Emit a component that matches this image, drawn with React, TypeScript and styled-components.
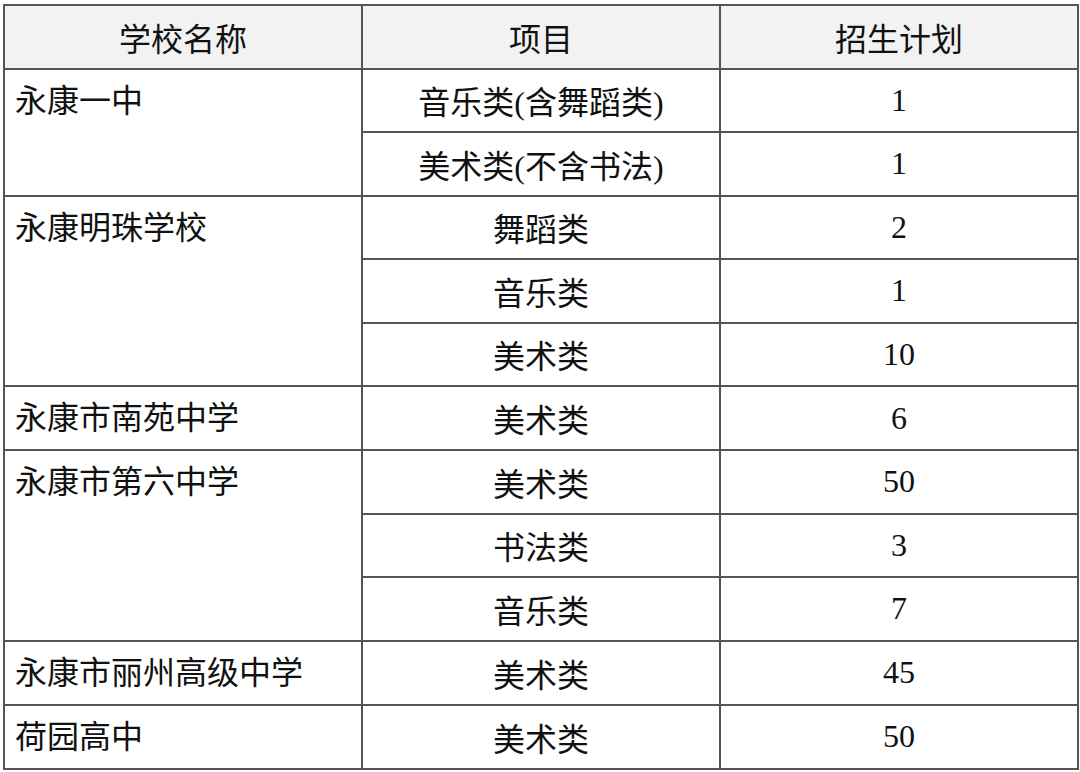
import React from "react";
import styled, { createGlobalStyle } from "styled-components";

const GlobalStyle = createGlobalStyle`
  html, body {
    margin: 0;
    padding: 0;
    background: #ffffff;
  }
`;

const Page = styled.div`
  padding: 4px 0 0 3px;
  width: 1080px;
  height: 772px;
  box-sizing: border-box;
  overflow: hidden;
`;

const Table = styled.table`
  width: 1074px;
  border-collapse: collapse;
  table-layout: fixed;
  border: 2px solid #555;
  font-family: "Liberation Serif", "Noto Sans CJK SC", serif;
  font-size: 32px;
  color: #111;
  tr {
    height: 63.5px;
  }
`;

const HeadCell = styled.th`
  background: #f2f2f2;
  border: 2px solid #555;
  font-weight: 400;
  text-align: center;
  padding: 0;
`;

const SchoolCell = styled.td`
  border: 2px solid #555;
  text-align: left;
  vertical-align: top;
  padding: 0 10px;
  line-height: 62px;
  white-space: nowrap;
`;

const Cell = styled.td`
  border: 2px solid #555;
  text-align: center;
  vertical-align: middle;
  padding: 0;
  white-space: nowrap;
`;

const schools = [
  { name: "永康一中", items: [["音乐类(含舞蹈类)", "1"], ["美术类(不含书法)", "1"]] },
  { name: "永康明珠学校", items: [["舞蹈类", "2"], ["音乐类", "1"], ["美术类", "10"]] },
  { name: "永康市南苑中学", items: [["美术类", "6"]] },
  { name: "永康市第六中学", items: [["美术类", "50"], ["书法类", "3"], ["音乐类", "7"]] },
  { name: "永康市丽州高级中学", items: [["美术类", "45"]] },
  { name: "荷园高中", items: [["美术类", "50"]] },
];

export default function App() {
  return (
    <Page>
      <GlobalStyle />
      <Table>
        <colgroup>
          <col style={{ width: 358 }} />
          <col style={{ width: 358 }} />
          <col style={{ width: 358 }} />
        </colgroup>
        <thead>
          <tr>
            <HeadCell>学校名称</HeadCell>
            <HeadCell>项目</HeadCell>
            <HeadCell>招生计划</HeadCell>
          </tr>
        </thead>
        <tbody>
          {schools.map((s) =>
            s.items.map(([item, num], i) => (
              <tr key={s.name + i}>
                {i === 0 && <SchoolCell rowSpan={s.items.length}>{s.name}</SchoolCell>}
                <Cell>{item}</Cell>
                <Cell>{num}</Cell>
              </tr>
            ))
          )}
        </tbody>
      </Table>
    </Page>
  );
}
